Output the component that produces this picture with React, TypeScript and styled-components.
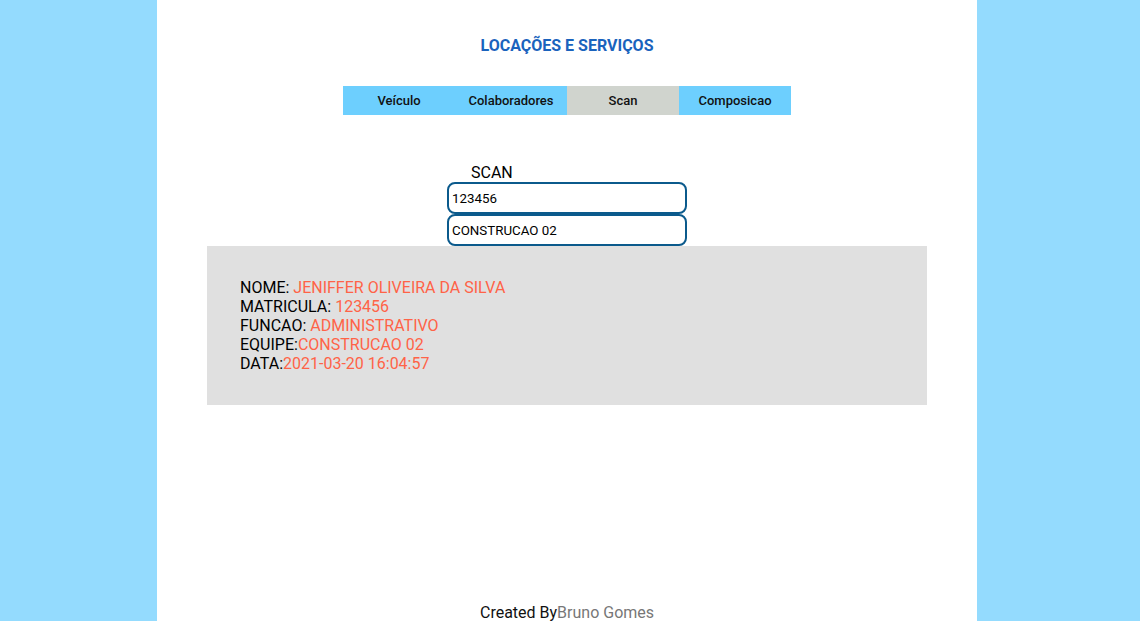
import React from 'react';
import styled, { createGlobalStyle } from 'styled-components';

const GlobalStyle = createGlobalStyle`
  html, body {
    margin: 0;
    padding: 0;
    background: #94dbfe;
    font-family: Roboto, "Liberation Sans", sans-serif;
  }
`

const StyledPage = styled.div`
  display: grid;
  grid-template-columns: 157px 820px 1fr;
  min-height: 100vh;
`

const StyledColumn = styled.div`
  grid-column: 2;
  background: #fff;
  display: flex;
  flex-direction: column;
  align-items: center;
  height: 100vh;
  overflow: hidden;
`

const StyledTitle = styled.h1`
  margin: 36px 0 0;
  font-size: 16px;
  line-height: 19px;
  font-weight: 700;
  color: #1a63bd;
`

const StyledTabs = styled.nav`
  display: flex;
  margin-top: 31px;
`

const StyledTab = styled.div<{ active?: boolean }>`
  width: 112px;
  height: 29px;
  display: flex;
  align-items: center;
  justify-content: center;
  font-size: 13px;
  font-weight: 500;
  color: #111;
  background: ${({ active }) => (active ? '#d0d4ce' : '#6dcffe')};
`

const StyledForm = styled.div`
  display: flex;
  flex-direction: column;
  width: 240px;
  margin-top: 48px;
`

const StyledLabel = styled.div`
  font-size: 16px;
  line-height: 19px;
  color: #000;
  padding-left: 24px;
`

const StyledInput = styled.input`
  box-sizing: border-box;
  width: 240px;
  height: 32px;
  border: 2px solid #0b5a8c;
  border-radius: 8px;
  padding: 0 3px;
  font-family: Roboto, "Liberation Sans", sans-serif;
  font-size: 13.33px;
  font-weight: 400;
  color: #000;
  outline: none;
`

const StyledCard = styled.div`
  box-sizing: border-box;
  width: 720px;
  height: 159px;
  background: #e0e0e0;
  padding: 32px 33px;
  font-size: 16px;
  line-height: 19px;
  color: #000;
`

const StyledValue = styled.span`
  color: #ff6347;
`

const StyledFooter = styled.footer`
  margin-top: auto;
  margin-bottom: -1px;
  font-size: 16px;
  line-height: 19px;
  color: #111;
`

const StyledAuthor = styled.span`
  color: #777;
`

const rows = [
  { label: 'NOME: ', value: 'JENIFFER OLIVEIRA DA SILVA' },
  { label: 'MATRICULA: ', value: '123456' },
  { label: 'FUNCAO: ', value: 'ADMINISTRATIVO' },
  { label: 'EQUIPE:', value: 'CONSTRUCAO 02' },
  { label: 'DATA:', value: '2021-03-20 16:04:57' },
]

const tabs = ['Veículo', 'Colaboradores', 'Scan', 'Composicao']

const App = () => {
  return (
    <StyledPage>
      <GlobalStyle />
      <StyledColumn>
        <StyledTitle>LOCAÇÕES E SERVIÇOS</StyledTitle>
        <StyledTabs>
          {tabs.map(tab => (
            <StyledTab key={tab} active={tab === 'Scan'}>{tab}</StyledTab>
          ))}
        </StyledTabs>
        <StyledForm>
          <StyledLabel>SCAN</StyledLabel>
          <StyledInput defaultValue="123456" />
          <StyledInput defaultValue="CONSTRUCAO 02" />
        </StyledForm>
        <StyledCard>
          {rows.map(row => (
            <div key={row.label}>
              {row.label}<StyledValue>{row.value}</StyledValue>
            </div>
          ))}
        </StyledCard>
        <StyledFooter>
          Created By<StyledAuthor>Bruno Gomes</StyledAuthor>
        </StyledFooter>
      </StyledColumn>
    </StyledPage>
  );
};

export default App;
